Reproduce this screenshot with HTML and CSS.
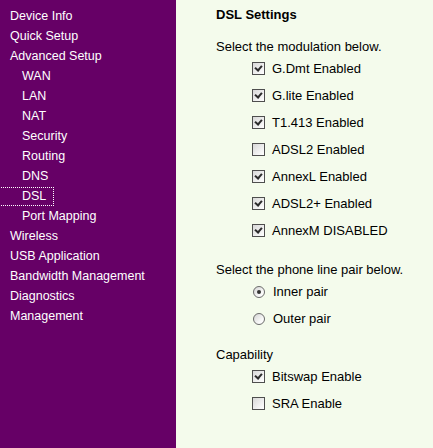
FILE: index.html
```html
<!DOCTYPE html>
<html lang="en">

<head>
    <meta charset="UTF-8">
    <meta name="viewport" content="width=device-width, initial-scale=1.0">
    <title>DSL Settings</title>
    <link rel="stylesheet" href="styles.css">
</head>

<body>
    <div class="menu">
        <a href="#">Device Info</a>
        <a href="#">Quick Setup</a>
        <a href="#">Advanced Setup</a>
        <a class="sub" href="#">WAN</a>
        <a class="sub" href="#">LAN</a>
        <a class="sub" href="#">NAT</a>
        <a class="sub" href="#">Security</a>
        <a class="sub" href="#">Routing</a>
        <a class="sub" href="#">DNS</a>
        <a class="sub current" href="#">DSL</a>
        <a class="sub" href="#">Port Mapping</a>
        <a href="#">Wireless</a>
        <a href="#">USB Application</a>
        <a href="#">Bandwidth Management</a>
        <a href="#">Diagnostics</a>
        <a href="#">Management</a>
    </div>

    <div class="content">
        <div class="title">DSL Settings</div>

        <div class="caption first">Select the modulation below.</div>
        <div class="options">
            <div class="row"><span class="box on"></span>G.Dmt Enabled</div>
            <div class="row"><span class="box on"></span>G.lite Enabled</div>
            <div class="row"><span class="box on"></span>T1.413 Enabled</div>
            <div class="row"><span class="box"></span>ADSL2 Enabled</div>
            <div class="row"><span class="box on"></span>AnnexL Enabled</div>
            <div class="row"><span class="box on"></span>ADSL2+ Enabled</div>
            <div class="row"><span class="box on"></span>AnnexM DISABLED</div>
        </div>

        <div class="caption phone">Select the phone line pair below.</div>
        <div class="options">
            <div class="row"><span class="radio on"></span>Inner pair</div>
            <div class="row"><span class="radio"></span>Outer pair</div>
        </div>

        <div class="caption cap">Capability</div>
        <div class="options">
            <div class="row"><span class="box on"></span>Bitswap Enable</div>
            <div class="row"><span class="box"></span>SRA Enable</div>
        </div>
    </div>
</body>

</html>
```

FILE: styles.css
```css
body {
    margin: 0;
    display: flex;
    height: 100vh;
    font-family: "Liberation Sans", Arial, sans-serif;
    background-color: #f4fbec;
    overflow: hidden;
}

.menu {
    width: 176px;
    flex-shrink: 0;
    background-color: #660066;
    padding-top: 8px;
    display: flex;
    flex-direction: column;
    align-items: flex-start;
}

.menu a {
    display: block;
    color: #fff;
    text-decoration: none;
    font-size: 12.5px;
    line-height: 17px;
    padding-left: 10px;
    margin-bottom: 3px;
}

.menu a.sub {
    padding-left: 22px;
}

.menu a.current {
    padding-right: 7px;
    outline: 1px dotted #fff;
}

.content {
    flex: 1;
    padding-left: 40px;
    font-size: 13px;
    color: #000;
}

.title {
    font-weight: bold;
    line-height: 30px;
}

.caption {
    line-height: 16px;
}

.caption.first {
    margin-top: 9px;
}

.caption.phone {
    margin-top: 18px;
}

.caption.cap {
    margin-top: 15px;
}

.options {
    padding-left: 36px;
}

.row {
    height: 27px;
    display: flex;
    align-items: center;
}

.box {
    width: 11px;
    height: 11px;
    border: 1px solid #4e4e4e;
    background: linear-gradient(135deg, #d8d8d8, #f4f4f4 70%, #fff);
    margin-right: 7px;
    position: relative;
}

.box.on::after {
    content: "";
    position: absolute;
    left: 3px;
    top: 1px;
    width: 3px;
    height: 5px;
    border-right: 2px solid #2b2b2b;
    border-bottom: 2px solid #2b2b2b;
    transform: rotate(40deg);
}

.radio {
    width: 10px;
    height: 10px;
    border: 1px solid #6a6a6a;
    border-radius: 50%;
    background: linear-gradient(135deg, #d4d4d4, #fafafa 70%, #fff);
    margin-left: 1px;
    margin-right: 8px;
    position: relative;
}

.radio.on::after {
    content: "";
    position: absolute;
    left: 3px;
    top: 3px;
    width: 4px;
    height: 4px;
    border-radius: 50%;
    background-color: #333;
}
```
